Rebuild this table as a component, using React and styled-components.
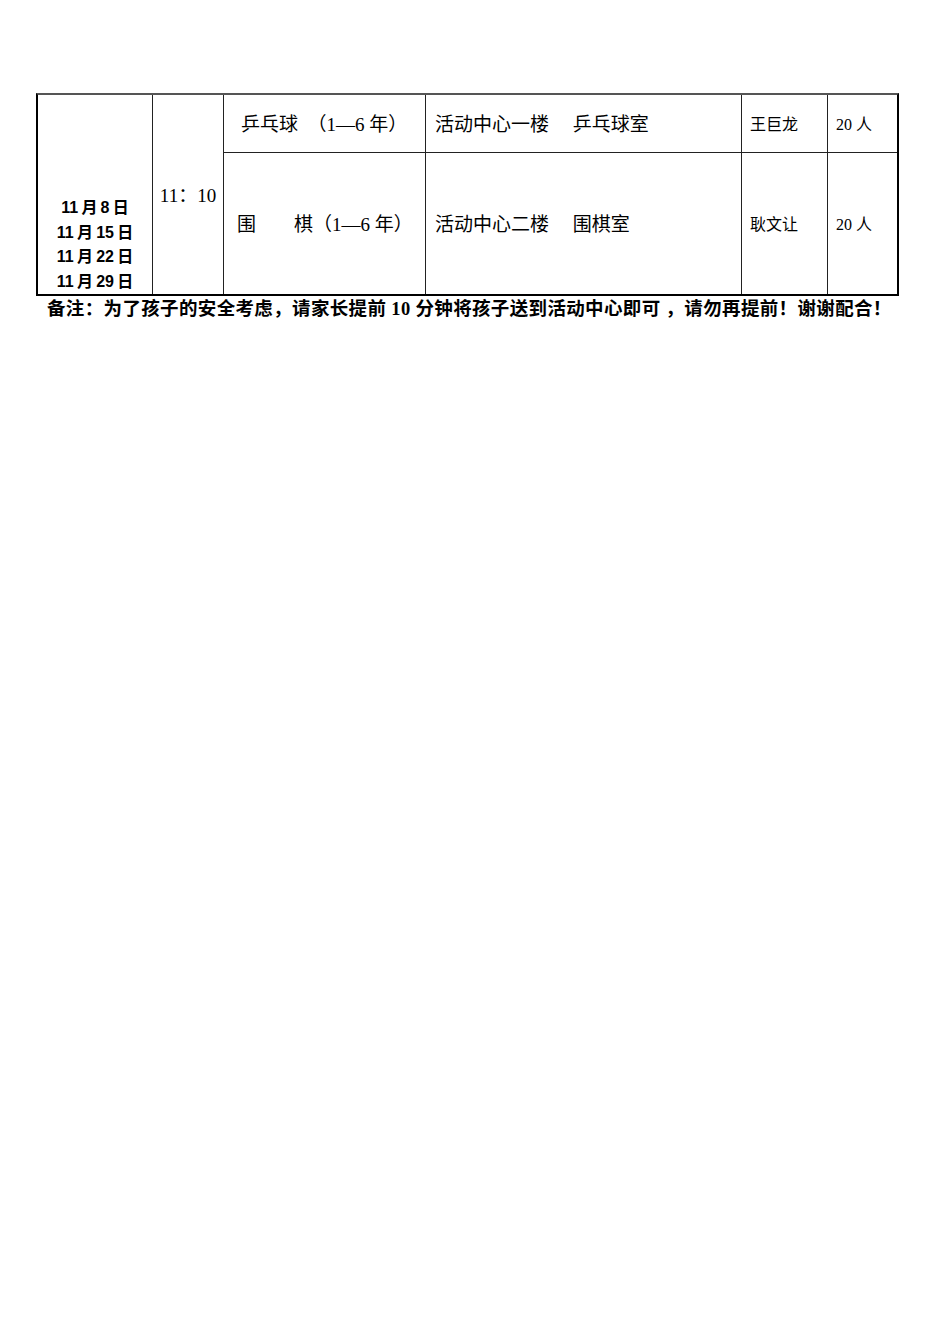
import styled, { createGlobalStyle } from "styled-components";

const GlobalStyle = createGlobalStyle`
  html, body {
    margin: 0;
    padding: 0;
    background: #fff;
    color: #000;
  }
  body {
    font-family: "Liberation Serif", "Noto Sans CJK SC", serif;
  }
`;

const CJK = `"Liberation Serif", "Noto Sans CJK SC", serif`;
const CJK_BOLD = `"Liberation Sans", "Noto Sans CJK SC", sans-serif`;

const Page = styled.div`
  width: 950px;
  min-height: 1344px;
  padding: 93px 0 0 36px;
  box-sizing: border-box;
`;

const Schedule = styled.div`
  width: 863px;
  display: grid;
  grid-template-columns: 115px 71px 202px 316px 86px 69px;
  grid-template-rows: 58px 141px;
  border: 2px solid #000;
  border-top: 2px solid #555;
  box-sizing: border-box;
`;

const Cell = styled.div`
  display: flex;
  align-items: ${(p) => p.$valign || "center"};
  justify-content: ${(p) => p.$align || "flex-start"};
  padding-left: ${(p) => p.$pad || 0}px;
  padding-top: ${(p) => (p.$valign ? 0 : 3)}px;
  border-right: ${(p) => (p.$last ? "none" : "1px solid #222")};
  border-bottom: ${(p) => (p.$bottom ? "none" : "1px solid #222")};
  grid-row: ${(p) => p.$rows || "auto"};
  font-family: ${CJK};
  font-size: ${(p) => p.$size || 19}px;
  line-height: 1.2;
  white-space: pre;
  box-sizing: border-box;
`;

const Dates = styled.div`
  width: 100%;
  text-align: center;
  font-family: ${CJK_BOLD};
  font-weight: 700;
  font-size: 16px;
  line-height: 24.5px;
  word-spacing: 1px;
`;

const Note = styled.p`
  margin: 0;
  padding-left: 11px;
  font-family: ${CJK};
  font-weight: 700;
  font-size: 18.5px;
  letter-spacing: 0.35px;
  line-height: 27px;
  white-space: pre;
`;

const dates = ["11\u2009月\u20098\u2009日", "11\u2009月\u200915\u2009日", "11\u2009月\u200922\u2009日", "11\u2009月\u200929\u2009日"];

const App = () => {
  return (
    <Page>
      <GlobalStyle />
      <Schedule>
        <Cell $rows="1 / span 2" $valign="flex-end" $bottom>
          <Dates>
            {dates.map((d) => (
              <div key={d}>{d}</div>
            ))}
          </Dates>
        </Cell>
        <Cell $rows="1 / span 2" $align="center" $bottom>11：10</Cell>
        <Cell $pad={17}>乒乓球　（1—6 年）</Cell>
        <Cell $pad={9}>活动中心一楼　 乒乓球室</Cell>
        <Cell $pad={8} $size={16}>王巨龙</Cell>
        <Cell $pad={8} $size={16} $last>20 人</Cell>
        <Cell $pad={13} $bottom>围　　棋（1—6 年）</Cell>
        <Cell $pad={9} $bottom>活动中心二楼　 围棋室</Cell>
        <Cell $pad={8} $size={16} $bottom>耿文让</Cell>
        <Cell $pad={8} $size={16} $bottom $last>20 人</Cell>
      </Schedule>
      <Note>备注：为了孩子的安全考虑，请家长提前 10 分钟将孩子送到活动中心即可 ，请勿再提前！谢谢配合！</Note>
    </Page>
  );
};

export default App;
